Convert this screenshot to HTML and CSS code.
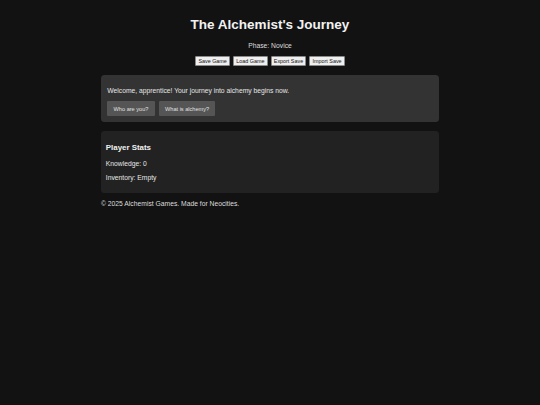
FILE: index.html
```html
<!DOCTYPE html>
<html lang="en">
<head>
<meta charset="utf-8">
<title>The Alchemist's Journey</title>
<link rel="stylesheet" href="styles.css">
</head>
<body>
<div class="container">
  <header class="header">
    <h1 class="title">The Alchemist's Journey</h1>
    <p class="phase">Phase: Novice</p>
    <div class="save-controls">
      <button class="save-btn">Save Game</button>
      <button class="save-btn">Load Game</button>
      <button class="save-btn">Export Save</button>
      <button class="save-btn">Import Save</button>
    </div>
  </header>
  <section class="card story">
    <p class="text">Welcome, apprentice! Your journey into alchemy begins now.</p>
    <div class="choices">
      <button class="choice">Who are you?</button>
      <button class="choice">What is alchemy?</button>
    </div>
  </section>
  <section class="card stats">
    <h3 class="stats-title">Player Stats</h3>
    <p class="text">Knowledge: 0</p>
    <p class="text">Inventory: Empty</p>
  </section>
  <footer class="footer">© 2025 Alchemist Games. Made for Neocities.</footer>
</div>
</body>
</html>
```

FILE: styles.css
```css
html, body {
  margin: 0;
  padding: 0;
  background: #121212;
}
body {
  font-family: "Liberation Sans", Arial, sans-serif;
  color: #e6e6e6;
  font-size: 6.75px;
  line-height: 1.15;
}
.container {
  width: 338px;
  margin: 0 auto;
  padding-top: 17px;
}
.header {
  text-align: center;
}
.title {
  margin: 0;
  font-size: 13.5px;
  font-weight: bold;
  color: #f2f2f2;
  line-height: 15.5px;
}
.phase {
  margin: 9px 0 7px;
  color: #dddddd;
}
.save-controls {
  display: flex;
  justify-content: center;
  gap: 3px;
}
.save-btn {
  font-family: "Liberation Sans", Arial, sans-serif;
  font-size: 5.4px;
  line-height: 6.5px;
  padding: 0.5px 2.2px;
  background: #efefef;
  color: #111;
  border: 1px solid #8a8a8a;
  border-radius: 1px;
}
.card {
  border-radius: 3.5px;
  margin-top: 9px;
}
.story {
  background: #333333;
  padding: 6.3px;
}
.stats {
  background: #222222;
  padding: 6.3px 4.8px 7px;
}
.text {
  margin: 6.75px 0;
  color: #e6e6e6;
}
.story .text {
  margin-top: 5.5px;
}
.choices {
  display: flex;
  gap: 4px;
}
.choice {
  font-family: "Liberation Sans", Arial, sans-serif;
  font-size: 5.6px;
  background: #555555;
  color: #e0e0e0;
  border: none;
  border-radius: 1px;
  padding: 0 6.3px;
  height: 15px;
}
.stats-title {
  margin: 5px 0 8px;
  font-size: 7.9px;
  font-weight: bold;
  color: #f0f0f0;
  line-height: 9px;
}
.stats .text:last-child {
  margin-bottom: 4.5px;
}
.footer {
  margin-top: 7px;
  color: #dcdcdc;
}
```
